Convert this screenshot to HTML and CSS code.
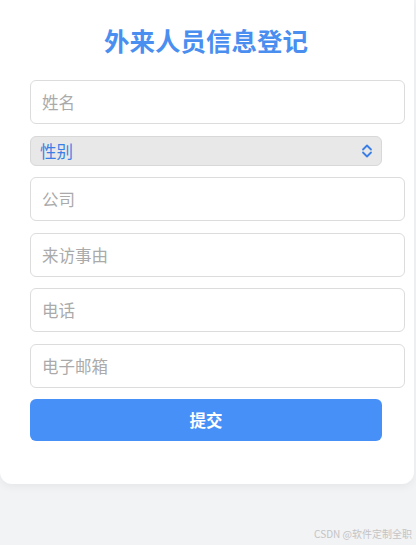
FILE: index.html
```html
<!DOCTYPE html>
<html lang="zh-CN">
<head>
<meta charset="utf-8">
<title>外来人员信息登记</title>
<link rel="stylesheet" href="styles.css">
</head>
<body>
<div class="card">
  <h1 class="title">外来人员信息登记</h1>
  <form class="form">
    <input class="field" type="text" placeholder="姓名">
    <div class="select-wrap">
      <select class="select">
        <option>性别</option>
        <option>男</option>
        <option>女</option>
      </select>
      <svg class="chevron" width="12" height="16" viewBox="0 0 12 16" aria-hidden="true">
        <path d="M2 6.5 L6 2.5 L10 6.5 M2 9.5 L6 13.5 L10 9.5" fill="none" stroke="#3b7fe6" stroke-width="1.8" stroke-linecap="round" stroke-linejoin="round"/>
      </svg>
    </div>
    <input class="field" type="text" placeholder="公司">
    <input class="field" type="text" placeholder="来访事由">
    <input class="field" type="text" placeholder="电话">
    <input class="field" type="text" placeholder="电子邮箱">
    <button class="submit" type="button">提交</button>
  </form>
</div>
<div class="watermark">CSDN @软件定制全职</div>
</body>
</html>
```

FILE: styles.css
```css
html, body {
  margin: 0;
  padding: 0;
}
body {
  background: #f2f3f5;
  font-family: "Noto Sans CJK SC", "Noto Sans", sans-serif;
  width: 416px;
  height: 545px;
  overflow: hidden;
}
.card {
  width: 414px;
  box-sizing: border-box;
  background: #ffffff;
  border-radius: 0 0 12px 12px;
  box-shadow: 0 3px 8px rgba(0, 0, 0, 0.05);
  padding: 22px 0 43px 30px;
}
.title {
  margin: 0 0 22px 0;
  width: 352px;
  text-align: center;
  font-size: 25.5px;
  line-height: 36px;
  font-weight: 700;
  color: #4a8ff0;
}
.form {
  width: 352px;
  display: flex;
  flex-direction: column;
  gap: 11.5px;
}
.field {
  width: 375px;
  height: 44px;
  box-sizing: border-box;
  border: 1px solid #dcdcdc;
  border-radius: 6px;
  padding: 0 11px;
  font-family: inherit;
  font-size: 16.5px;
  color: #333;
  background: #fff;
  outline: none;
}
.field::placeholder {
  color: #aaaaaa;
}
.select-wrap {
  position: relative;
  width: 352px;
  height: 30px;
}
.select {
  appearance: none;
  -webkit-appearance: none;
  width: 100%;
  height: 30px;
  box-sizing: border-box;
  border: 1px solid #d8d8d8;
  border-radius: 6px;
  background: #e8e8e8;
  color: #3b7fe6;
  font-family: inherit;
  font-size: 16.5px;
  padding: 0 9px;
  outline: none;
}
.chevron {
  position: absolute;
  right: 9px;
  top: 7px;
  pointer-events: none;
}
.submit {
  width: 352px;
  height: 42px;
  border: none;
  border-radius: 6px;
  background: #4790f7;
  color: #ffffff;
  font-family: inherit;
  font-size: 16.5px;
  font-weight: 700;
  cursor: pointer;
}
.watermark {
  margin-top: 44px;
  text-align: right;
  padding-right: 4px;
  font-size: 10px;
  line-height: 12px;
  color: #c4c4c4;
}
```
